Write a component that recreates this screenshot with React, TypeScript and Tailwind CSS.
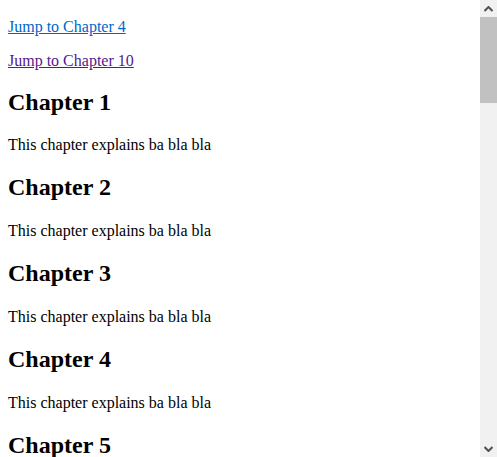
const chapters = Array.from({ length: 25 }, (_, i) => i + 1);

function Chevron({ down }: { down?: boolean }) {
  return (
    <svg width="9" height="6" viewBox="0 0 9 6" className={down ? 'rotate-180' : ''}>
      <path d="M0.5 5 L4.5 1 L8.5 5" fill="none" stroke="#505050" strokeWidth="2" />
    </svg>
  );
}

function Scrollbar() {
  return (
    <div className="w-[17px] shrink-0 flex flex-col bg-[#f1f1f1]">
      <div className="h-[17px] flex items-center justify-center">
        <Chevron />
      </div>
      <div className="h-[86px] bg-[#c1c1c1]" />
      <div className="flex-1" />
      <div className="h-[17px] flex items-center justify-center">
        <Chevron down />
      </div>
    </div>
  );
}

export default function App() {
  return (
    <div className="flex h-[457px] w-[497px] overflow-hidden bg-white">
      <div className="flex-1 min-w-0 overflow-hidden text-black text-[16px] leading-[1.15] [font-family:'Liberation_Serif','Times_New_Roman',serif]">
        <div className="px-2 pt-[18px] pb-4">
          <p className="mb-4">
            <a href="#chapter4" className="text-[#0066cc] underline">
              Jump to Chapter 4
            </a>
          </p>
          <p className="my-4">
            <a href="#chapter10" className="text-[#551a8b] underline">
              Jump to Chapter 10
            </a>
          </p>
          {chapters.map((n) => (
            <div key={n}>
              <h2
                id={`chapter${n}`}
                className={`text-[24px] font-bold mb-[19.92px] ${n === 1 ? 'mt-[17.92px]' : 'mt-[19.92px]'}`}
              >
                Chapter {n}
              </h2>
              <p className="my-4">This chapter explains ba bla bla</p>
            </div>
          ))}
        </div>
      </div>
      <Scrollbar />
    </div>
  );
}
